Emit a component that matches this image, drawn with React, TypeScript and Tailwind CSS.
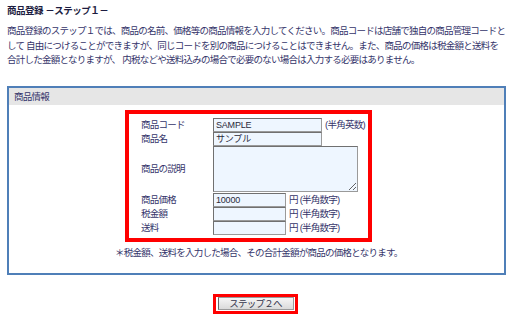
import React from "react";

const font = "font-['Liberation_Sans','Noto_Sans_CJK_JP',sans-serif]";
const txt = "text-[9.5px] tracking-[-0.75px]";

function Row({ label, children, h = "h-[14px]" }: { label: string; children: React.ReactNode; h?: string }) {
  return (
    <div className={`flex items-center ${h}`}>
      <div className={`w-[72px] shrink-0 ${txt} leading-[14px] whitespace-nowrap`}>{label}</div>
      <div className="flex items-center">{children}</div>
    </div>
  );
}

const inputCls =
  "h-[14px] border border-[#9a9a9a] border-t-[#707070] border-l-[#707070] bg-[#eef6ff] px-[2px] text-[9px] tracking-[-0.2px] leading-[12px] text-[#2a2a3a] outline-none";

function Unit({ children }: { children: React.ReactNode }) {
  return <span className={`ml-[3px] ${txt} leading-[14px] whitespace-nowrap`}>{children}</span>;
}

export default function App() {
  return (
    <div className={`w-[514px] h-[320px] overflow-hidden bg-white pl-[7px] pt-[4px] text-[#34346a] ${font}`}>
      <div className="h-[14px] text-[9.5px] tracking-[-0.5px] leading-[14px] font-bold text-[#1c1c40] whitespace-nowrap">
        商品登録 －ステップ１－
      </div>
      <p className={`mt-[6px] ${txt} leading-[14.5px] whitespace-nowrap`}>
        商品登録のステップ１では、商品の名前、価格等の商品情報を入力してください。商品コードは店舗で独自の商品管理コードと
        <br />
        して 自由につけることができますが、同じコードを別の商品につけることはできません。また、商品の価格は税金額と送料を
        <br />
        合計した金額となりますが、 内税などや送料込みの場合で必要のない場合は入力する必要はありません。
      </p>
      <div className="mt-[18px] w-[499px] border-2 border-[#4f7fb8]">
        <div className={`h-[17px] bg-[#e6e6e6] pl-[5px] ${txt} leading-[17px]`}>商品情報</div>
        <div className="ml-[116px] mt-[5px] w-[247px] border-4 border-[#ff0000] pl-[12px] pt-[4px] pb-[3px]">
          <Row label="商品コード">
            <input className={`${inputCls} w-[109px]`} defaultValue="SAMPLE" readOnly />
            <Unit>(半角英数)</Unit>
          </Row>
          <Row label="商品名">
            <input className={`${inputCls} w-[109px]`} defaultValue="サンプル" readOnly />
          </Row>
          <Row label="商品の説明" h="h-[47px]">
            <textarea
              className="h-[46px] w-[145px] border border-[#9a9a9a] border-t-[#707070] border-l-[#707070] bg-[#eef6ff] outline-none"
              readOnly
            />
          </Row>
          <Row label="商品価格">
            <input className={`${inputCls} w-[73px]`} defaultValue="10000" readOnly />
            <Unit>円 (半角数字)</Unit>
          </Row>
          <Row label="税金額">
            <input className={`${inputCls} w-[73px]`} defaultValue="" readOnly />
            <Unit>円 (半角数字)</Unit>
          </Row>
          <Row label="送料">
            <input className={`${inputCls} w-[73px]`} defaultValue="" readOnly />
            <Unit>円 (半角数字)</Unit>
          </Row>
        </div>
        <div className={`mt-[4px] h-[14px] pl-[106px] ${txt} leading-[14px] whitespace-nowrap`}>
          ＊税金額、送料を入力した場合、その合計金額が商品の価格となります。
        </div>
        <div className="h-[13px]" />
      </div>
      <div className="mt-[19px] ml-[206px] w-[85px] h-[20px] border-[3px] border-[#ff0000] flex items-center justify-center">
        <button
          className={`h-[13px] w-[76px] bg-gradient-to-b from-[#f6f6f6] to-[#dadada] border border-[#9a9a9a] border-l-[#666] ${txt} leading-[11px] text-[#33334a]`}
        >
          ステップ２へ
        </button>
      </div>
    </div>
  );
}
